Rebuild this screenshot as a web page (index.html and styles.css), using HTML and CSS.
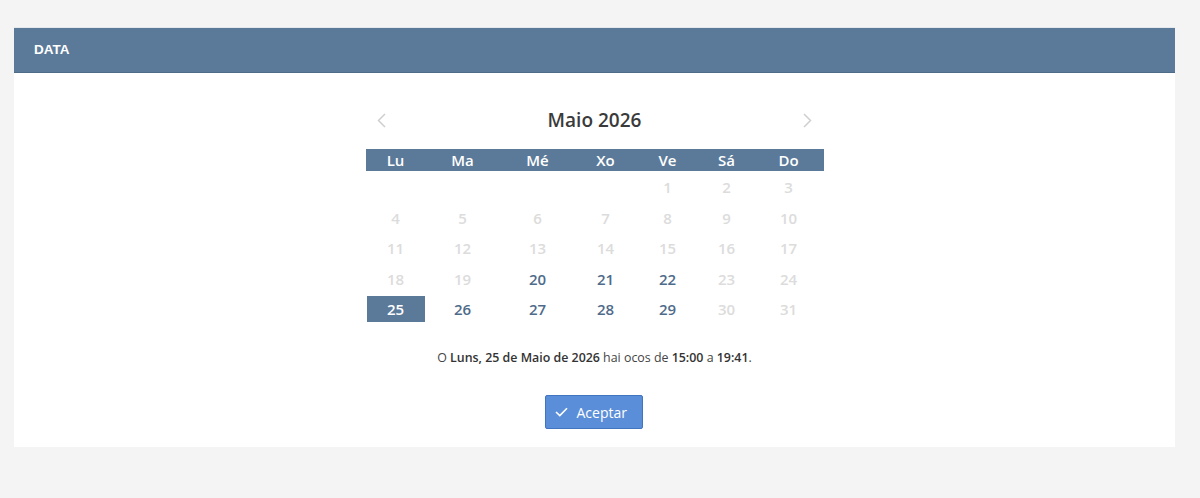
FILE: index.html
```html
<!DOCTYPE html>
<html lang="gl">
<head>
<meta charset="utf-8">
<title>Data</title>
<link rel="stylesheet" href="styles.css">
</head>
<body>
<section class="panel">
  <header class="panel-head">DATA</header>
  <div class="panel-body">
    <div class="calendar">
      <div class="cal-title">
        <span class="nav prev"><svg width="9" height="15" viewBox="0 0 9 15"><path d="M8 1 L1.5 7.5 L8 14" fill="none" stroke="#cfcfcf" stroke-width="1.5"/></svg></span>
        <span class="month">Maio 2026</span>
        <span class="nav next"><svg width="9" height="15" viewBox="0 0 9 15"><path d="M1 1 L7.5 7.5 L1 14" fill="none" stroke="#cfcfcf" stroke-width="1.5"/></svg></span>
      </div>
      <div class="grid weekdays">
        <div>Lu</div><div>Ma</div><div>Mé</div><div>Xo</div><div>Ve</div><div>Sá</div><div>Do</div>
      </div>
      <div class="grid days">
        <div></div><div></div><div></div><div></div><div class="off">1</div><div class="off">2</div><div class="off">3</div>
        <div class="off">4</div><div class="off">5</div><div class="off">6</div><div class="off">7</div><div class="off">8</div><div class="off">9</div><div class="off">10</div>
        <div class="off">11</div><div class="off">12</div><div class="off">13</div><div class="off">14</div><div class="off">15</div><div class="off">16</div><div class="off">17</div>
        <div class="off">18</div><div class="off">19</div><div class="on">20</div><div class="on">21</div><div class="on">22</div><div class="off">23</div><div class="off">24</div>
        <div class="sel">25</div><div class="on">26</div><div class="on">27</div><div class="on">28</div><div class="on">29</div><div class="off">30</div><div class="off">31</div>
      </div>
    </div>
    <p class="info">O <b>Luns, 25 de Maio de 2026</b> hai ocos de <b>15:00</b> a <b>19:41</b>.</p>
    <div class="actions">
      <button class="btn" type="button"><svg width="13" height="10" viewBox="0 0 13 10"><path d="M1 5 L4.8 8.6 L12 1.2" fill="none" stroke="#fff" stroke-width="1.6"/></svg>Aceptar</button>
    </div>
  </div>
</section>
</body>
</html>
```
FILE: styles.css
```css
html, body {
  margin: 0;
  padding: 0;
  background: #f4f4f4;
}
body {
  padding: 27px 25px 0 14px;
  font-family: "Open Sans", "Liberation Sans", sans-serif;
  color: #333;
}
.panel {
  background: #fff;
  border-top: 1px solid #e4e8ec;
}
.panel-head {
  height: 44px;
  background: #5b7a99;
  border-bottom: 1px solid #4e6b88;
  color: #fff;
  font-family: "Liberation Sans", Arial, sans-serif;
  font-weight: bold;
  font-size: 13.5px;
  line-height: 44px;
  padding-left: 20px;
}
.panel-body {
  padding: 32px 0 18px;
}
.calendar {
  width: 458px;
  margin: 0 auto;
}
.cal-title {
  height: 30px;
  display: flex;
  align-items: center;
  justify-content: space-between;
  padding: 0 11px 0 11px;
  margin-bottom: 14px;
}
.nav {
  display: flex;
  width: 10px;
}
.month {
  font-size: 19px;
  font-weight: 600;
  color: #3a3a3a;
  line-height: 30px;
}
.grid {
  display: grid;
  grid-template-columns: 60px 74px 76px 60px 64px 54px 70px;
}
.weekdays {
  background: #5b7a99;
  height: 22px;
  color: #fff;
  font-size: 15px;
  font-weight: 600;
  line-height: 22px;
  text-align: center;
}
.days {
  margin-top: 3px;
  grid-auto-rows: 26px;
  row-gap: 4.5px;
  font-size: 15px;
  font-weight: 600;
  text-align: center;
  line-height: 26px;
}
.days .off { color: #dcdcdc; }
.days .on { color: #4f6b8a; }
.days .sel {
  background: #5b7a99;
  color: #fff;
  margin: 0 1px;
}
.info {
  margin: 27px 0 0;
  text-align: center;
  font-size: 12.4px;
  line-height: 18px;
  color: #444;
}
.info b {
  font-weight: 600;
  color: #333;
}
.actions {
  display: flex;
  justify-content: center;
  margin-top: 28px;
}
.btn {
  display: flex;
  align-items: center;
  gap: 9px;
  width: 98px;
  height: 34px;
  margin-left: -2px;
  padding: 0 0 0 9px;
  background: #5b8ed8;
  border: 1px solid #4275c0;
  border-radius: 2px;
  color: #fff;
  font-family: "Open Sans", "Liberation Sans", sans-serif;
  font-size: 14px;
}
```
